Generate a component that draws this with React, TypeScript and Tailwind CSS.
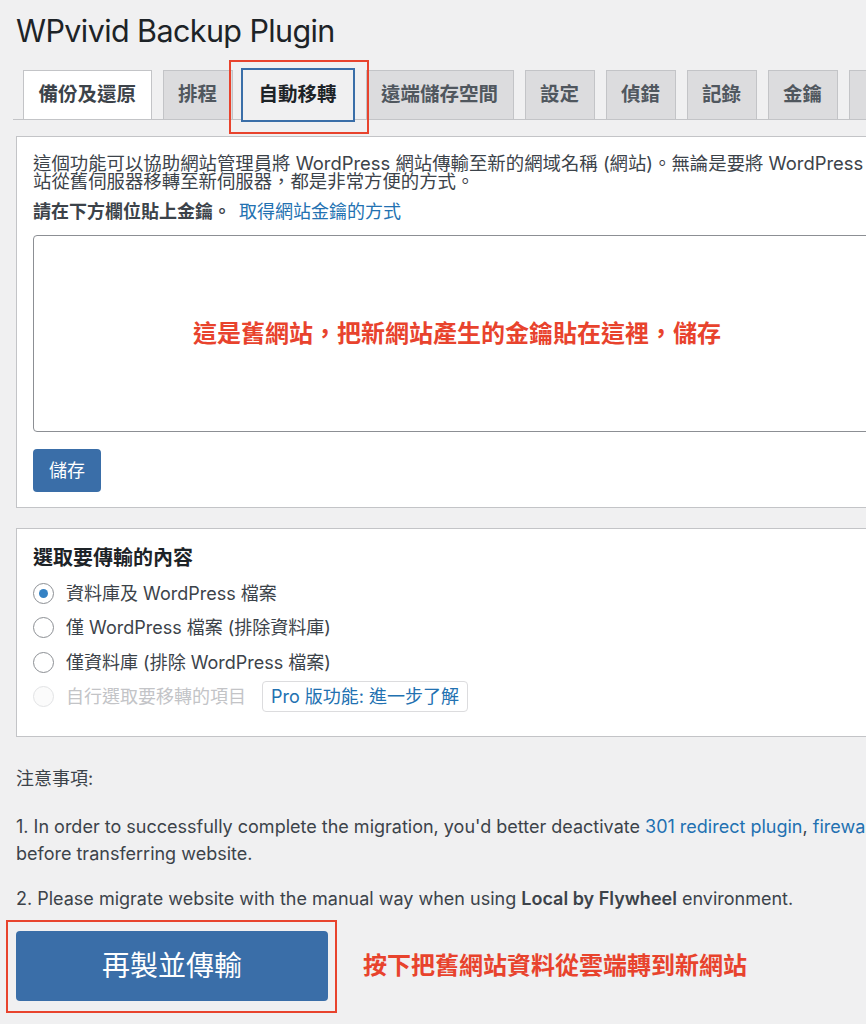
import React from "react";

const tabs = ["備份及還原", "排程", "自動移轉", "遠端儲存空間", "設定", "偵錯", "記錄", "金鑰", "授權"];

function Radio({ checked, disabled }: { checked?: boolean; disabled?: boolean }) {
  return (
    <span
      className={
        "flex h-[21px] w-[21px] shrink-0 items-center justify-center rounded-full border " +
        (disabled ? "border-[#e2e3e5] bg-[#fbfbfb]" : "border-[#8c8f94] bg-white")
      }
    >
      {checked ? <span className="h-[9px] w-[9px] rounded-full bg-[#3582c4]" /> : null}
    </span>
  );
}

export default function App() {
  const options = [
    { label: "資料庫及 WordPress 檔案", checked: true },
    { label: "僅 WordPress 檔案 (排除資料庫)" },
    { label: "僅資料庫 (排除 WordPress 檔案)" },
  ];

  return (
    <div className="h-[1024px] w-[866px] overflow-hidden bg-[#f0f0f1] font-['Inter','Noto_Sans_CJK_TC',sans-serif] text-[#3c434a]">
      <div className="w-[898px] pl-4">
        <h1 className="mt-3 text-[30.5px] leading-[38px] tracking-[-0.6px] text-[#1d2327]">WPvivid Backup Plugin</h1>

        {/* tabs */}
        <div className="mt-5 -ml-[3px] border-b border-[#c3c4c7] pl-[10px]">
          <div className="flex gap-[11px]">
            {tabs.map((tab, i) => {
              const base = "flex h-[49px] shrink-0 items-center px-[14.5px] text-[19.5px] font-semibold whitespace-nowrap";
              if (i === 0) return <div key={tab} className={base + " border border-b-0 border-[#c3c4c7] bg-white text-[#3c434a]"}>{tab}</div>;
              if (i === 2)
                return (
                  <div
                    key={tab}
                    className={base + " relative -mt-[2px] -mb-[3px] -ml-[3px] h-[54px] border-2 border-[#3a6ea8] bg-[#f0f0f1] px-[16px] text-[#1d2327]"}
                  >
                    {tab}
                    <span className="pointer-events-none absolute -top-[10px] -right-[16px] -bottom-[14px] -left-[14px] border-2 border-[#e8432d]" />
                  </div>
                );
              return (
                <div key={tab} className={base + " border border-b-0 border-[#c3c4c7] bg-[#dcdcde] text-[#50575e]" + (i === 8 ? " pl-[20px]" : "")}>
                  {tab}
                </div>
              );
            })}
          </div>
        </div>

        {/* key panel */}
        <div className="mt-4 border border-[#c3c4c7] bg-white px-4 pt-[17px] pb-[15px]">
          <p className="text-[18.4px] leading-[18px] whitespace-nowrap">
            這個功能可以協助網站管理員將 WordPress 網站傳輸至新的網域名稱 (網站)。無論是要將 WordPress 網
            <br />
            站從舊伺服器移轉至新伺服器，都是非常方便的方式。
          </p>
          <p className="mt-[11px] text-[18px] leading-[22px]">
            <span className="font-bold">請在下方欄位貼上金鑰。</span>
            <a className="ml-[8px] text-[#2271b1]">取得網站金鑰的方式</a>
          </p>
          <div className="mt-3 flex h-[197px] items-center justify-center rounded-[4px] border border-[#8c8f94] bg-white">
            <span className="text-[24px] font-bold text-[#e8432d]">這是舊網站，把新網站產生的金鑰貼在這裡，儲存</span>
          </div>
          <button className="mt-[17px] h-[43px] w-[68px] rounded-[4px] bg-[#3a6ea8] text-[18px] text-white">儲存</button>
        </div>

        {/* content panel */}
        <div className="mt-5 border border-[#c3c4c7] bg-white px-4 pt-[19px] pb-[22px]">
          <h2 className="mb-2 text-[20px] leading-[20px] font-bold text-[#1d2327]">選取要傳輸的內容</h2>
          {options.map((o) => (
            <div key={o.label} className="flex h-[34.5px] items-center gap-3 text-[18px]">
              <Radio checked={o.checked} />
              <span>{o.label}</span>
            </div>
          ))}
          <div className="flex h-[34.5px] items-center gap-3 text-[18px]">
            <Radio disabled />
            <span className="text-[#c3c4c7]">自行選取要移轉的項目</span>
            <span className="ml-[4px] flex h-[31px] items-center rounded-[4px] border border-[#dcdcde] bg-white px-2 text-[#2271b1]">
              Pro 版功能: 進一步了解
            </span>
          </div>
        </div>

        {/* notes */}
        <div className="text-[18px] leading-[27px]">
          <p className="mt-[28px]">注意事項:</p>
          <p className="mt-[21px] whitespace-nowrap">
            1. In order to successfully complete the migration, you'd better deactivate{" "}
            <a className="text-[#2271b1]">301 redirect plugin</a>, <a className="text-[#2271b1]">firewall and security plugin</a>, and{" "}
            <a className="text-[#2271b1]">caching plugin</a>
            <br />
            before transferring website.
          </p>
          <p className="mt-[18px] whitespace-nowrap">
            2. Please migrate website with the manual way when using <b className="font-semibold">Local by Flywheel</b> environment.
          </p>
        </div>

        <div className="mt-[19px] flex items-center">
          <div className="relative">
            <button className="h-[70px] w-[312px] rounded-[4px] bg-[#3a6ea8] text-[28px] text-white">再製並傳輸</button>
            <span className="pointer-events-none absolute -top-[11px] -right-[9px] -bottom-[12px] -left-[10px] border-2 border-[#e8432d]" />
          </div>
          <span className="ml-[35px] text-[24px] font-bold text-[#e8432d]">按下把舊網站資料從雲端轉到新網站</span>
        </div>
      </div>
    </div>
  );
}
